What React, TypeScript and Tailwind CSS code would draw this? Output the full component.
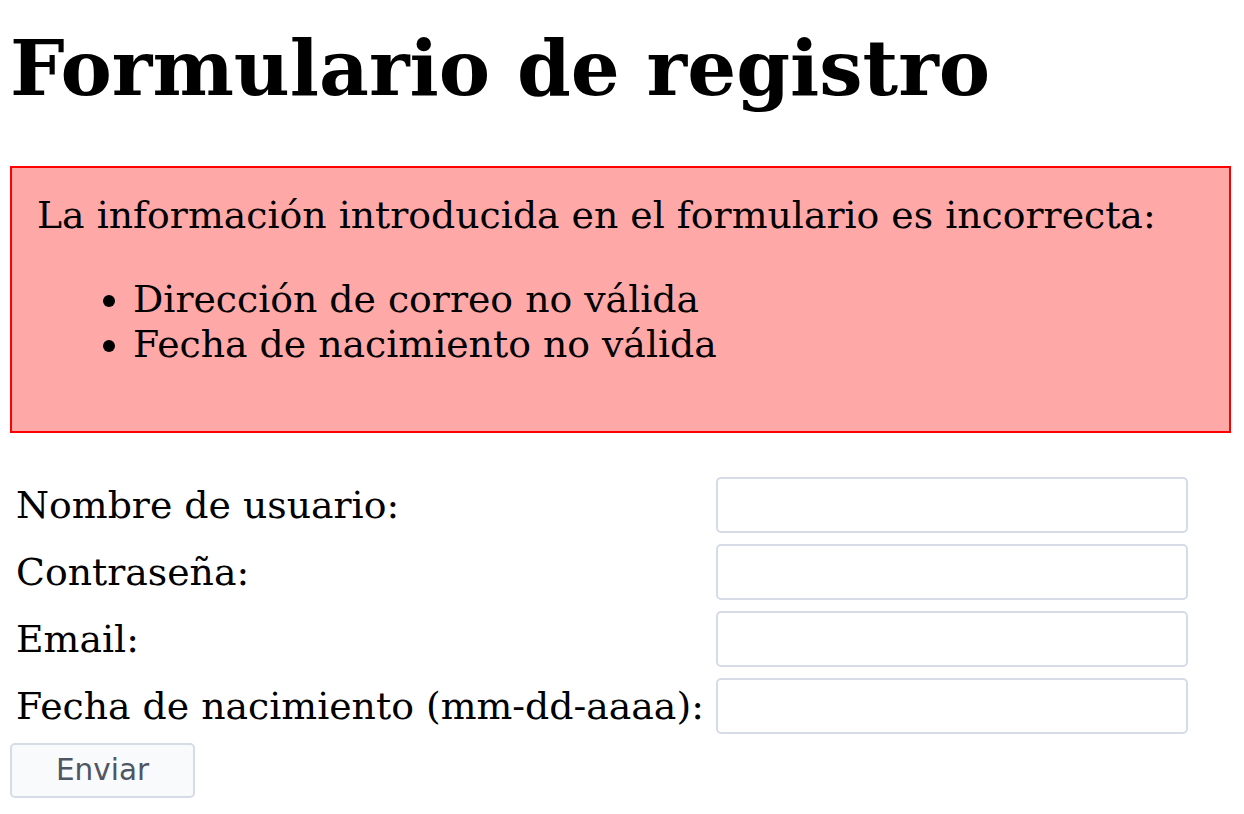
const serif = "font-['DejaVu_Serif','Liberation_Serif',serif]";

const fields = [
  { label: 'Nombre de usuario:', type: 'text' },
  { label: 'Contraseña:', type: 'password' },
  { label: 'Email:', type: 'text' },
  { label: 'Fecha de nacimiento (mm-dd-aaaa):', type: 'text' },
];

export default function App() {
  return (
    <div className={`${serif} min-h-[814px] bg-white px-[10px] pt-[24px] text-black`}>
      <h1 className="text-[77px] font-bold leading-[89px]">Formulario de registro</h1>

      <div className="mt-[53px] w-[1221px] border-2 border-[#ff0000] bg-[#ffa8a8] px-[25px] py-[25px] text-[37.8px] leading-[45.5px]">
        <p className="mb-[38px]">La información introducida en el formulario es incorrecta:</p>
        <ul className="mb-[38px] list-disc pl-[96px]">
          <li>Dirección de correo no válida</li>
          <li>Fecha de nacimiento no válida</li>
        </ul>
      </div>

      <form className="mt-[44px]">
        <div className="grid grid-cols-[max-content_472px] items-center justify-start gap-x-[10px] gap-y-[11px] pl-[6px] text-[37.8px] leading-[44px]">
          {fields.map((f) => (
            <div key={f.label} className="contents">
              <label className="w-[690px] whitespace-nowrap">{f.label}</label>
              <input
                type={f.type}
                className="h-[56px] w-[472px] rounded-[5px] border-2 border-[#d5dce8] bg-white"
              />
            </div>
          ))}
        </div>
        <button
          type="button"
          className="mt-[9px] h-[55px] w-[185px] rounded-[5px] border-2 border-[#d5dce8] bg-[#f9fafb] font-['DejaVu_Sans',sans-serif] text-[29.5px] text-[#4f5563]"
        >
          Enviar
        </button>
      </form>
    </div>
  );
}
